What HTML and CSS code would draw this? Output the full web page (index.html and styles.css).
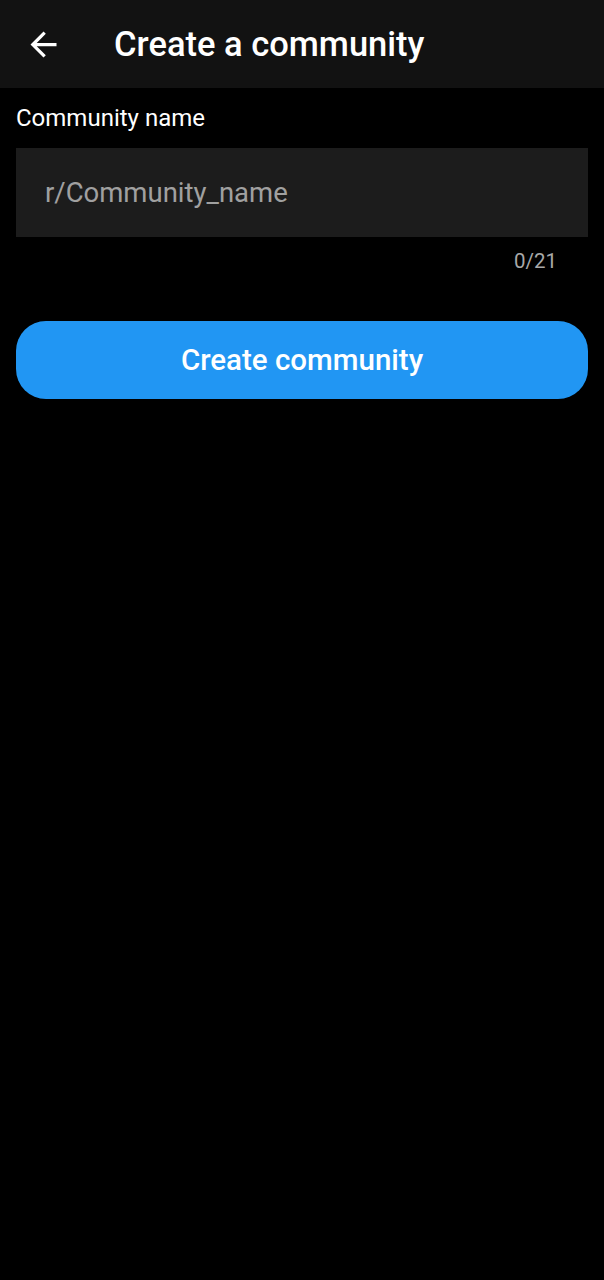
FILE: index.html
```html
<!DOCTYPE html>
<html>
<head>
<meta charset="utf-8">
<link rel="stylesheet" href="styles.css">
</head>
<body>
<header class="appbar">
  <button class="back" aria-label="Back">
    <svg width="39" height="39" viewBox="0 0 24 24"><path d="M20 11H7.83l5.59-5.59L12 4l-8 8 8 8 1.41-1.41L7.83 13H20v-2z" fill="#fff"/></svg>
  </button>
  <h1 class="title">Create a community</h1>
</header>
<main class="content">
  <label class="label">Community name</label>
  <div class="field"><span class="placeholder">r/Community_name</span></div>
  <div class="counter">0/21</div>
  <button class="create">Create community</button>
</main>
</body>
</html>
```
FILE: styles.css
```css
html, body { margin: 0; padding: 0; background: #000; }
body { font-family: Roboto, "Noto Sans", sans-serif; color: #fff; width: 604px; height: 1280px; }
.appbar { height: 88px; background: #121212; display: flex; align-items: center; }
.back { background: none; border: 0; padding: 0; margin-left: 24px; width: 39px; height: 39px; display: flex; }
.title { margin: 0 0 0 51px; font-size: 34.5px; font-weight: 500; line-height: 40px; }
.content { padding: 0 16px; display: flex; flex-direction: column; }
.label { font-size: 24px; margin-top: 15px; line-height: 30px; }
.field { margin-top: 15px; height: 89px; background: #1c1c1c; display: flex; align-items: center; padding-left: 29px; }
.placeholder { font-size: 27.5px; color: #a0a0a0; }
.counter { align-self: flex-end; margin-right: 31px; margin-top: 12px; font-size: 20.5px; color: #a8a8a8; line-height: 24px; }
.create { margin-top: 48px; height: 78px; border: 0; border-radius: 30px; background: #2196f3; color: #fff; font-family: Roboto, sans-serif; font-size: 29.5px; font-weight: 500; }
```
